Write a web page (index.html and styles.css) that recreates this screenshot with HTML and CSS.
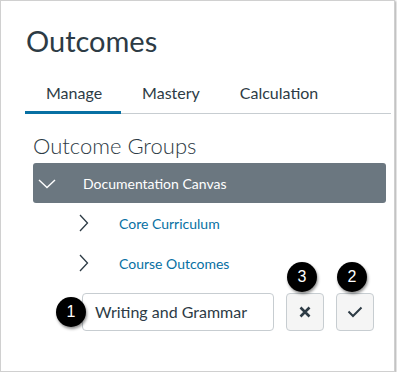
FILE: index.html
```html
<!DOCTYPE html>
<html>
    <head>
        <title>Outcomes</title>
        <link rel="stylesheet" href="styles.css">
    </head>
    <body>
        <div id="frame">
            <h1 id="title">Outcomes</h1>
            <div id="tabs">
                <span class="tab active">Manage</span>
                <span class="tab">Mastery</span>
                <span class="tab">Calculation</span>
            </div>
            <div id="groups-title">Outcome Groups</div>
            <div class="group open">
                <svg class="chev-down" width="18" height="10" viewBox="0 0 18 10"><path d="M1 1 L9 8.5 L17 1" fill="none" stroke="#fff" stroke-width="1.4"/></svg>
                <span>Documentation Canvas</span>
            </div>
            <div class="group sub">
                <svg class="chev-right" width="10" height="18" viewBox="0 0 10 18"><path d="M1 1 L8.5 9 L1 17" fill="none" stroke="#2d3b45" stroke-width="1.3"/></svg>
                <a href="#">Core Curriculum</a>
            </div>
            <div class="group sub">
                <svg class="chev-right" width="10" height="18" viewBox="0 0 10 18"><path d="M1 1 L8.5 9 L1 17" fill="none" stroke="#2d3b45" stroke-width="1.3"/></svg>
                <a href="#">Course Outcomes</a>
            </div>
            <div id="edit-row">
                <div class="field">
                    <span class="badge b1">1</span>
                    <div class="input">Writing and Grammar</div>
                </div>
                <div class="btn">
                    <span class="badge">3</span>
                    <svg width="12" height="12" viewBox="0 0 12 12"><path d="M1.5 1.5 L10.5 10.5 M10.5 1.5 L1.5 10.5" stroke="#2d3b45" stroke-width="2.6"/></svg>
                </div>
                <div class="btn">
                    <span class="badge">2</span>
                    <svg width="16" height="12" viewBox="0 0 16 12"><path d="M1.5 5.5 L6 10 L14.5 1.5" fill="none" stroke="#2d3b45" stroke-width="2"/></svg>
                </div>
            </div>
        </div>
    </body>
</html>
```

FILE: styles.css
```css
body {
    margin: 0px;
    background: #ffffff;
    font-family: Lato, "Open Sans", sans-serif;
    color: #2d3b45;
}
#frame {
    width: 369px;
    height: 349px;
    border: 1px solid #d0d0d0;
    box-shadow: 1px 1px 2px rgba(0,0,0,0.35);
    padding: 21px 0px 0px 24px;
    overflow: hidden;
}
#title {
    font-size: 29px;
    font-weight: normal;
    line-height: 1.2;
    margin: 2px 0px 0px 1px;
}
#tabs {
    display: flex;
    margin-top: 24px;
    width: 366px;
    border-bottom: 1px solid #c7cdd1;
}
.tab {
    font-size: 16px;
    line-height: 1.2;
    padding: 0px 19px 9px 21px;
    border-bottom: 3px solid transparent;
    margin-bottom: -1px;
}
.tab.active {
    border-bottom-color: #0770a3;
}
#groups-title {
    font-size: 22px;
    font-weight: 300;
    line-height: 1.2;
    margin: 19px 0px 0px 8px;
}
.group {
    display: flex;
    align-items: center;
    height: 40px;
    margin-left: 8px;
    width: 353px;
    font-size: 14px;
}
.group.open {
    background: #6b7780;
    color: #ffffff;
    border-radius: 3px;
    margin-top: 4px;
}
.chev-down {
    margin: 1px 27px 0px 5px;
}
.group.sub {
    margin-left: 54px;
}
.chev-right {
    margin: 0px 30px 0px 0px;
}
.group a {
    color: #0770a3;
    text-decoration: none;
}
#edit-row {
    display: flex;
    margin: 10px 0px 0px 31px;
}
.field {
    display: flex;
    align-items: center;
}
.input {
    width: 178px;
    height: 36px;
    border: 1px solid #c7cdd1;
    border-radius: 4px;
    font-size: 16px;
    line-height: 36px;
    padding-left: 12px;
}
.btn {
    position: relative;
    width: 36px;
    height: 36px;
    border: 1px solid #c7cdd1;
    border-radius: 4px;
    background: #f5f5f5;
    display: flex;
    align-items: center;
    justify-content: center;
    margin-left: 12px;
}
.badge {
    width: 30px;
    height: 30px;
    border-radius: 50%;
    background: #000000;
    color: #ffffff;
    font-family: "Liberation Sans", Arial, sans-serif;
    font-size: 16px;
    line-height: 30px;
    text-align: center;
    box-shadow: 1px 2px 3px rgba(0,0,0,0.45);
    position: relative;
    z-index: 1;
}
.badge.b1 {
    margin-right: -4px;
}
.btn .badge {
    position: absolute;
    left: 0px;
    top: -32px;
}
```
